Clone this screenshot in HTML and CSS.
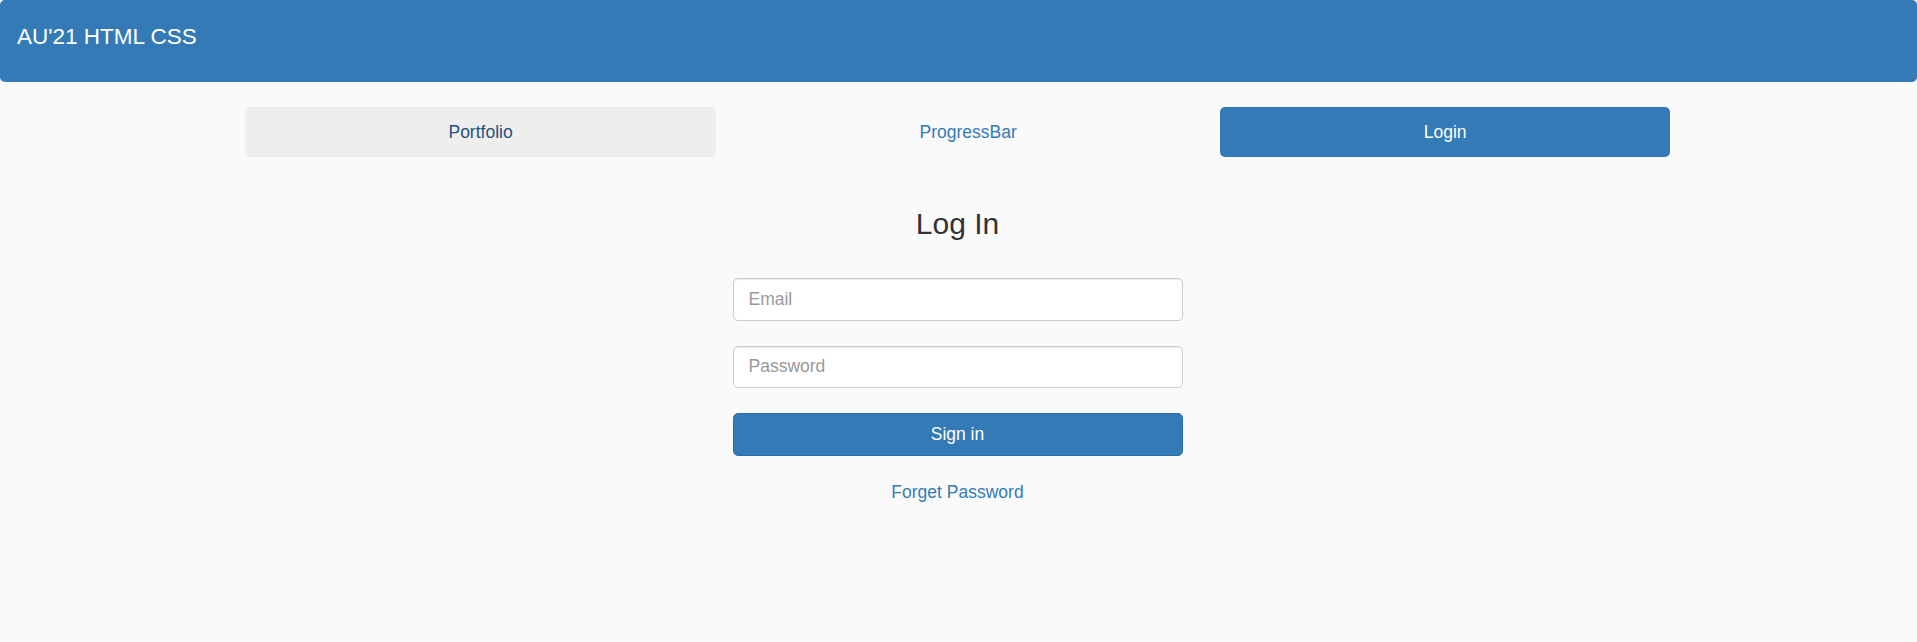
FILE: index.html
```html
<!DOCTYPE html>
<html lang="en">
<head>
<meta charset="utf-8">
<title>AU'21 HTML CSS</title>
<link rel="stylesheet" href="styles.css">
</head>
<body>
<header class="navbar">
  <a class="brand" href="#">AU'21 HTML CSS</a>
</header>
<div class="content">
  <nav class="pills">
    <a class="pill pill-focus" href="#">Portfolio</a>
    <a class="pill" href="#">ProgressBar</a>
    <a class="pill pill-active" href="#">Login</a>
  </nav>
  <main class="login">
    <h3 class="login-title">Log In</h3>
    <form class="login-form">
      <div class="form-group"><input class="field" type="email" placeholder="Email"></div>
      <div class="form-group"><input class="field" type="password" placeholder="Password"></div>
      <button class="btn-primary" type="button">Sign in</button>
    </form>
    <a class="forget" href="#">Forget Password</a>
  </main>
</div>
</body>
</html>
```
FILE: styles.css
```css
* { box-sizing: border-box; }
html, body { margin: 0; padding: 0; }
body {
  background: #fafafa;
  font-family: "Liberation Sans", Arial, sans-serif;
  font-size: 17.5px;
  line-height: 25px;
  color: #333;
}
a { text-decoration: none; }

.navbar {
  height: 82px;
  background: #337ab7;
  border-radius: 5px;
  padding: 24px 0 0 17px;
}
.brand {
  display: block;
  color: #fff;
  font-size: 22.5px;
  line-height: 25px;
}

.content { margin-right: 2px; }

.pills {
  width: 1425px;
  margin: 25px auto 0;
  display: flex;
}
.pill {
  flex: 1 1 auto;
  text-align: center;
  padding: 12.5px 18.75px;
  line-height: 25px;
  border-radius: 5px;
  color: #337ab7;
}
.pill-focus { background: #eee; color: #23527c; }
.pill-active { background: #337ab7; color: #fff; }

.login {
  display: flex;
  flex-direction: column;
  align-items: center;
}
.login-title {
  margin: 50px 0 0;
  font-size: 30px;
  line-height: 33px;
  font-weight: 500;
  color: #333;
}
.login-form {
  width: 450px;
  margin-top: 38px;
  display: flex;
  flex-direction: column;
}
.form-group { margin-bottom: 25px; }
.field {
  display: block;
  width: 100%;
  height: 42.5px;
  padding: 7.5px 15px;
  font-family: inherit;
  font-size: 17.5px;
  line-height: 25px;
  color: #555;
  background: #fff;
  border: 1px solid #ccc;
  border-radius: 5px;
  box-shadow: inset 0 1px 1px rgba(0,0,0,.075);
}
.field::placeholder { color: #999; }
.btn-primary {
  width: 100%;
  height: 42.5px;
  font-family: inherit;
  font-size: 17.5px;
  line-height: 25px;
  color: #fff;
  background: #337ab7;
  border: 1px solid #2e6da4;
  border-radius: 5px;
  padding: 7.5px 15px;
}
.forget {
  margin-top: 24px;
  color: #337ab7;
}
```
